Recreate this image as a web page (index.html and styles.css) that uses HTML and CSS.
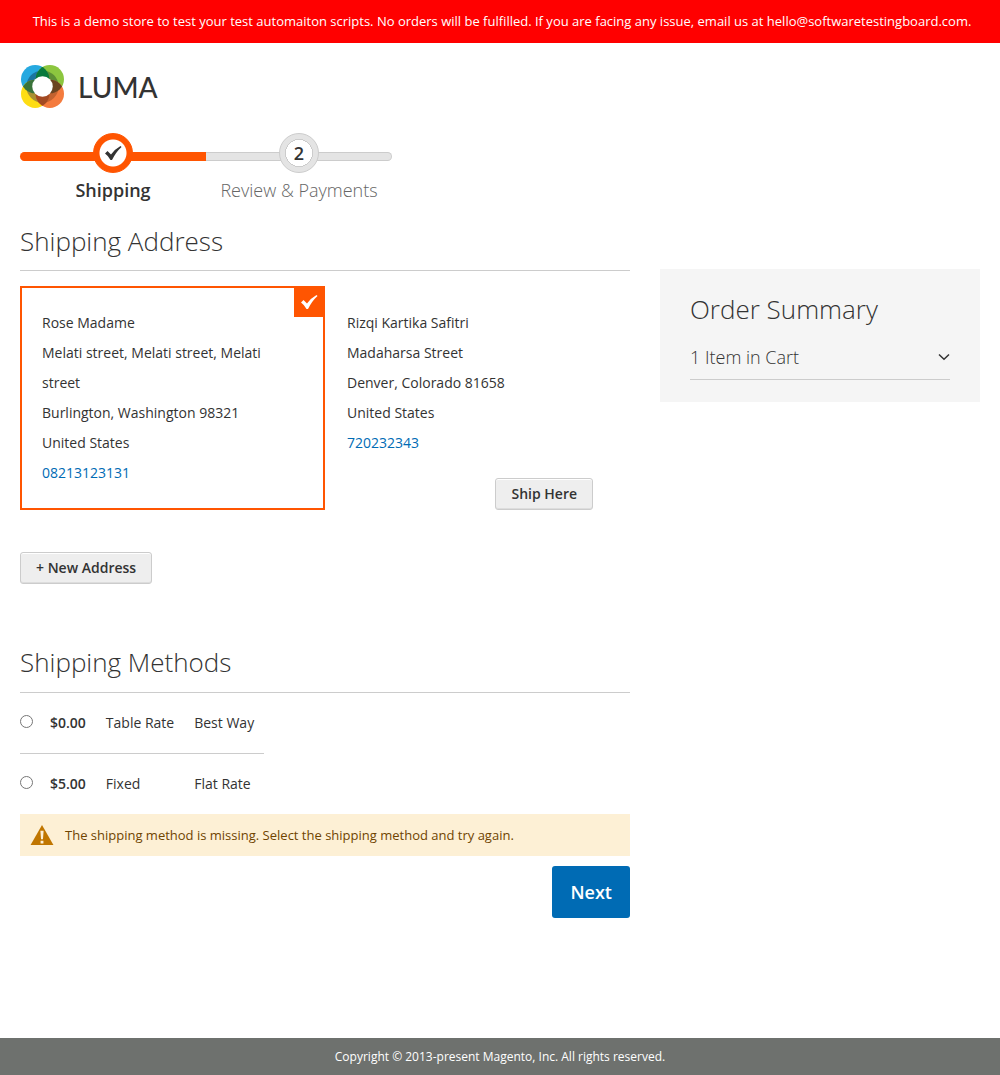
FILE: index.html
```html
<!DOCTYPE html>
<html lang="en">
<head>
<meta charset="utf-8">
<meta name="viewport" content="width=device-width, initial-scale=1">
<title>Checkout</title>
<link rel="stylesheet" href="styles.css">
</head>
<body>
<div class="notice">This is a demo store to test your test automaiton scripts. No orders will be fulfilled. If you are facing any issue, email us at hello@softwaretestingboard.com.</div>

<header class="header">
  <a class="logo" href="#" aria-label="Luma">
    <svg class="logo-mark" viewBox="0 0 44 44" aria-hidden="true">
      <defs>
        <clipPath id="tl"><circle cx="14.500" cy="14.500" r="14.500"/></clipPath>
        <clipPath id="tr"><circle cx="29.500" cy="14.500" r="14.500"/></clipPath>
        <clipPath id="bl"><circle cx="14.500" cy="29.500" r="14.500"/></clipPath>
        <clipPath id="br"><circle cx="29.500" cy="29.500" r="14.500"/></clipPath>
      </defs>
      <circle cx="14.500" cy="14.500" r="14.500" fill="#26a9e0"/>
      <circle cx="29.500" cy="14.500" r="14.500" fill="#8cc63f"/>
      <circle cx="14.500" cy="29.500" r="14.500" fill="#fedd14"/>
      <circle cx="29.500" cy="29.500" r="14.500" fill="#f47b3e"/>
      <circle cx="22" cy="22" r="16.500" fill="#1b75a0" clip-path="url(#tl)"/>
      <circle cx="22" cy="22" r="16.500" fill="#5c8f35" clip-path="url(#tr)"/>
      <circle cx="22" cy="22" r="16.500" fill="#a99131" clip-path="url(#bl)"/>
      <circle cx="22" cy="22" r="16.500" fill="#c3622f" clip-path="url(#br)"/>
      <g clip-path="url(#tl)"><circle cx="29.500" cy="14.500" r="14.500" fill="#087a3d"/><circle cx="14.500" cy="29.500" r="14.500" fill="#39733a"/></g>
      <g clip-path="url(#br)"><circle cx="29.500" cy="14.500" r="14.500" fill="#6b4420"/><circle cx="14.500" cy="29.500" r="14.500" fill="#a34a22"/></g>
      <circle cx="22" cy="22" r="10.500" fill="#fff"/>
    </svg>
    <span class="logo-name">LUMA</span>
  </a>
</header>

<main class="page">
  <ol class="progress">
    <li class="step step-active">
      <span class="step-dot"><svg class="check" viewBox="0 0 18 16" aria-hidden="true"><path d="M1 8.500 3.500 6 7 9.500Q11 4 16.500 1L17.500 2Q12 7 8 15L6.500 15Q4.500 11 1 8.500Z"/></svg></span>
      <span>Shipping</span>
    </li>
    <li class="step">
      <span class="step-dot">2</span>
      <span>Review &amp; Payments</span>
    </li>
  </ol>

  <div class="columns">
    <div class="content">
      <section>
        <h2 class="title">Shipping Address</h2>
        <div class="addresses">
          <div class="address address-selected">
            <div>Rose Madame<br>Melati street, Melati street, Melati street<br>Burlington, Washington 98321<br>United States<br><a href="tel:08213123131">08213123131</a></div>
            <span class="badge"><svg class="check" viewBox="0 0 18 16" aria-hidden="true"><path d="M1 8.500 3.500 6 7 9.500Q11 4 16.500 1L17.500 2Q12 7 8 15L6.500 15Q4.500 11 1 8.500Z"/></svg></span>
          </div>
          <div class="address address-other">
            <div>Rizqi Kartika Safitri<br>Madaharsa Street<br>Denver, Colorado 81658<br>United States<br><a href="tel:720232343">720232343</a></div>
            <button class="button ship-here" type="button">Ship Here</button>
          </div>
        </div>
        <button class="button" type="button">+ New Address</button>
      </section>

      <form class="methods">
        <h2 class="title">Shipping Methods</h2>
        <table class="rates">
          <tr>
            <td><input type="radio" name="method" id="table-rate" aria-label="Table Rate, Best Way"></td>
            <td><label class="price" for="table-rate">$0.00</label></td>
            <td>Table Rate</td>
            <td>Best Way</td>
          </tr>
          <tr>
            <td><input type="radio" name="method" id="flat-rate" aria-label="Fixed, Flat Rate"></td>
            <td><label class="price" for="flat-rate">$5.00</label></td>
            <td>Fixed</td>
            <td>Flat Rate</td>
          </tr>
        </table>
        <div class="message" role="alert">
          <svg class="warning" viewBox="0 0 24 21" aria-hidden="true"><path fill="#c07600" d="M12 0 24 21H0Z"/><path fill="#fdf0d5" d="M10.300 6h3.400l-.7 9h-2zM10.500 16.500h3v3h-3z"/></svg>
          The shipping method is missing. Select the shipping method and try again.
        </div>
        <div class="actions"><button class="next" type="button">Next</button></div>
      </form>
    </div>

    <aside class="summary">
      <h2 class="summary-title">Order Summary</h2>
      <button class="cart-toggle" type="button" aria-expanded="false">
        1 Item in Cart
        <svg class="chevron" viewBox="0 0 12 8" aria-hidden="true"><path d="M1 1.500 6 6.200 11 1.500"/></svg>
      </button>
    </aside>
  </div>
</main>

<footer class="footer">Copyright © 2013-present Magento, Inc. All rights reserved.</footer>
</body>
</html>
```
FILE: styles.css
```css
* { box-sizing: border-box; }

body {
  margin: 0;
  min-height: 100vh;
  display: flex;
  flex-direction: column;
  font: 14px/20px "Open Sans", "Noto Sans", sans-serif;
  color: #333;
  background: #fff;
}

a { color: #006bb4; text-decoration: none; }

button { font-family: inherit; cursor: pointer; }

.notice {
  padding: 11px 20px 12px 24px;
  background: #f00;
  color: #fff;
  font-size: 13px;
  text-align: center;
}

.header { display: flex; padding: 22px 21px 0; }

.logo {
  display: flex;
  align-items: center;
  gap: 14px;
  color: #333;
}

.logo-mark { width: 43px; height: 43px; }

.logo-name { font: 500 28px/40px Lato, sans-serif; }

.page { flex: 1; padding: 25px 20px 120px; }

.progress {
  display: grid;
  grid-template-columns: 1fr 1fr;
  max-width: 372px;
  margin: 0 0 21px;
  padding: 0;
  list-style: none;
}

.step {
  position: relative;
  display: flex;
  flex-direction: column;
  align-items: center;
  gap: 5px;
  font-size: 18px;
  line-height: 24px;
  font-weight: 300;
  color: #666;
}

.step::before {
  content: "";
  position: absolute;
  top: 19px;
  left: 0;
  right: 0;
  height: 9px;
  background: #e4e4e4;
  border: 1px solid #ccc;
  border-left: 0;
  border-radius: 0 6px 6px 0;
  box-sizing: border-box;
}

.step-active { color: #333; font-weight: 600; }

.step-active::before {
  background: #ff5501;
  border-color: #ff5501;
  border-radius: 6px 0 0 6px;
}

.step-dot {
  position: relative;
  display: grid;
  place-items: center;
  width: 40px;
  height: 40px;
  border: 1px solid #ccc;
  border-radius: 50%;
  background: radial-gradient(circle, #fff 13px, #ccc 13px, #ccc 14px, #e4e4e4 14px);
  color: #333;
  font-weight: 600;
}

.step-active .step-dot {
  border-color: #ff5501;
  background: radial-gradient(circle, #fff 13px, #ff5501 14px);
}

.check { width: 18px; height: 16px; fill: currentColor; }

.columns {
  display: grid;
  grid-template-columns: minmax(0, 1fr) 320px;
  gap: 30px;
  align-items: start;
}

.title {
  margin: 0 0 15px;
  padding-bottom: 11px;
  border-bottom: 1px solid #ccc;
  font-size: 26px;
  line-height: 36px;
  font-weight: 300;
}

.addresses {
  display: grid;
  grid-template-columns: 1fr 1fr;
  margin-bottom: 42px;
}

.address {
  position: relative;
  display: flex;
  flex-direction: column;
  padding: 20px 35px 20px 20px;
  border: 2px solid transparent;
  line-height: 30px;
}

.address-selected { border-color: #ff5501; }

.address-other { padding-bottom: 0; border-bottom: 0; }

.badge {
  position: absolute;
  top: -1px;
  right: -1px;
  display: grid;
  place-items: center;
  width: 30px;
  height: 30px;
  background: #ff5501;
  color: #fff;
}

.button {
  display: block;
  padding: 5px 15px;
  border: 1px solid #ccc;
  border-radius: 3px;
  background: #eee;
  box-shadow: inset 0 1px 0 #fff, inset 0 -1px 0 #ddd;
  color: #333;
  font-size: 14px;
  line-height: 20px;
  font-weight: 600;
}

.ship-here { align-self: flex-end; margin-top: auto; }

.methods { margin-top: 60px; }

.methods .title { margin-bottom: 0; padding-bottom: 12px; }

.rates { border-collapse: collapse; }

.rates td { padding: 20px 10px; }

.rates td:first-child { padding: 18px 7px 22px 0; line-height: 0; }

.rates tr + tr td { border-top: 1px solid #ccc; }

.rates input { display: block; margin: 0; width: 13px; height: 13px; }

.price { font-weight: 600; }

.message {
  display: flex;
  align-items: center;
  gap: 11px;
  padding: 11px 10px;
  background: #fdf0d5;
  color: #6f4400;
  font-size: 13px;
}

.warning { width: 24px; height: 20px; flex: none; }

.actions { display: flex; justify-content: flex-end; margin-top: 10px; }

.next {
  padding: 14px 18px;
  border: 0;
  border-radius: 3px;
  background: #006bb4;
  color: #fff;
  font-size: 18px;
  line-height: 24px;
  font-weight: 600;
}

.summary {
  margin-top: 46px;
  padding: 22px 30px;
  background: #f5f5f5;
}

.summary-title {
  margin: 0 0 12px;
  font-size: 26px;
  line-height: 36px;
  font-weight: 300;
}

.cart-toggle {
  display: flex;
  align-items: center;
  justify-content: space-between;
  width: 100%;
  padding: 6px 0 10px;
  border: 0;
  border-bottom: 1px solid #ccc;
  background: none;
  color: #333;
  font-size: 18px;
  line-height: 24px;
  font-weight: 300;
}

.chevron {
  width: 12px;
  height: 8px;
  fill: none;
  stroke: #333;
  stroke-width: 1.500;
}

.footer {
  padding: 9px 20px 8px;
  background: #6e716e;
  color: #fff;
  font-size: 12px;
  text-align: center;
}
```
